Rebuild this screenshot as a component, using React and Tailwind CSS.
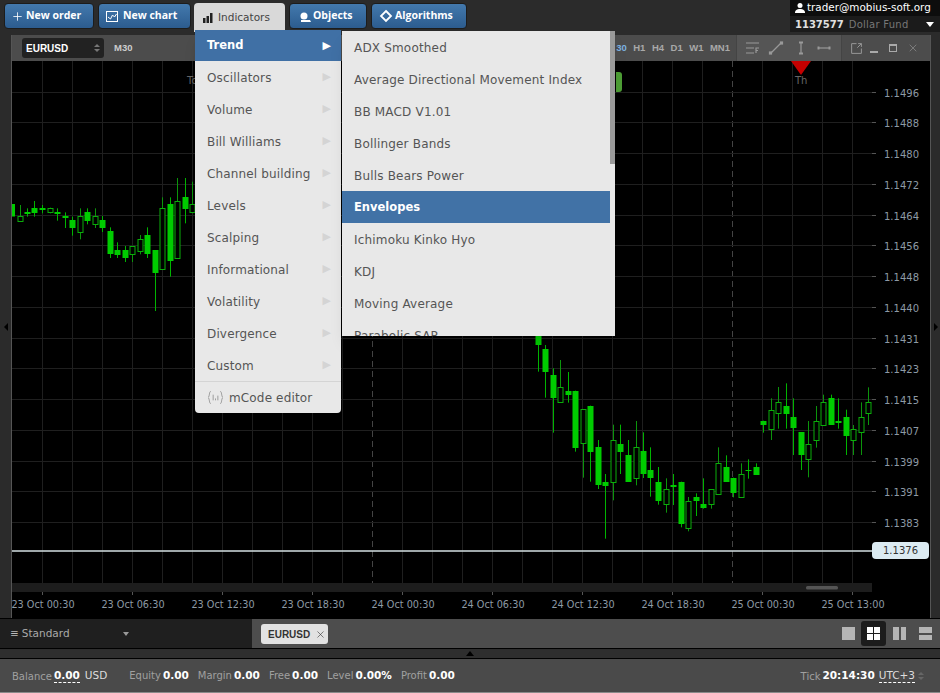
import React from 'react';
import { X, Plus } from 'lucide-react';

// candle tables are read off the screenshot at 3x: [x, wickTop, wickBottom, bodyTop, bodyBottom, hollow]
const leftCandles = [
  [59, 105, 152, 138, 152, 1], [81, 115, 140, 126, 132, 0], [103, 93, 140, 114, 129, 0], [126, 105, 130, 114, 120, 0],
  [149, 113, 130, 115, 128, 1], [171, 115, 152, 125, 131, 0], [194, 127, 174, 138, 143, 0], [216, 140, 197, 149, 174, 0],
  [239, 115, 208, 138, 185, 1], [261, 115, 163, 126, 152, 0], [284, 115, 174, 138, 162, 1], [306, 138, 186, 149, 174, 0],
  [329, 172, 264, 183, 253, 0], [351, 217, 264, 240, 254, 0], [374, 228, 276, 240, 264, 0], [397, 229, 276, 229, 254, 1],
  [419, 195, 253, 206, 242, 1], [442, 172, 264, 195, 253, 0], [464, 240, 423, 240, 310, 0], [487, 82, 298, 115, 298, 1],
  [509, 82, 320, 103, 275, 0], [532, 24, 264, 92, 264, 1], [554, 24, 160, 81, 116, 0], [577, 35, 130, 103, 128, 1],
];
const midCandles = [
  [24, 0, 125, 0, 45, 0], [46, 45, 203, 56, 126, 0], [68, 115, 308, 136, 205, 0], [91, 90, 218, 172, 218, 1],
  [113, 126, 218, 182, 195, 0], [136, 182, 365, 182, 352, 0], [158, 238, 443, 238, 341, 1], [181, 227, 455, 227, 364, 0],
  [204, 330, 477, 352, 466, 0], [226, 432, 626, 455, 468, 0], [248, 284, 511, 330, 455, 1], [271, 284, 432, 341, 365, 0],
  [294, 330, 456, 375, 456, 0], [317, 273, 466, 352, 444, 1], [339, 307, 444, 364, 433, 0], [361, 352, 500, 421, 446, 0],
  [384, 411, 524, 455, 513, 0], [407, 445, 548, 478, 524, 1], [429, 432, 525, 466, 471, 0], [452, 455, 592, 455, 581, 0],
  [474, 501, 604, 512, 592, 1], [497, 490, 558, 501, 513, 0], [519, 445, 536, 523, 536, 0], [542, 478, 536, 478, 524, 1],
  [565, 352, 490, 398, 490, 1], [587, 376, 456, 410, 456, 0], [609, 443, 502, 444, 490, 0], [632, 400, 502, 433, 502, 1],
  [654, 388, 446, 421, 425, 0], [677, 400, 433, 410, 433, 0],
];
const rightCandles = [
  [70, 152, 188, 152, 165, 0], [92, 85, 210, 119, 176, 1], [115, 51, 176, 97, 131, 1], [137, 40, 176, 108, 131, 0],
  [160, 85, 255, 142, 176, 0], [183, 187, 300, 187, 255, 0], [205, 153, 322, 221, 267, 1], [228, 108, 233, 153, 210, 1],
  [250, 74, 165, 97, 165, 1], [273, 74, 165, 85, 165, 0], [295, 85, 176, 153, 158, 0], [318, 119, 255, 142, 199, 0],
  [340, 165, 255, 176, 210, 1], [363, 97, 255, 142, 187, 1], [385, 52, 165, 97, 130, 1],
];

const prices = ['1.1496', '1.1488', '1.1480', '1.1472', '1.1464', '1.1456', '1.1448', '1.1440', '1.1431', '1.1423', '1.1415', '1.1407', '1.1399', '1.1391', '1.1383'];
const times = ['23 Oct 00:30', '23 Oct 06:30', '23 Oct 12:30', '23 Oct 18:30', '24 Oct 00:30', '24 Oct 06:30', '24 Oct 12:30', '24 Oct 18:30', '25 Oct 00:30', '25 Oct 13:00'];
const categories = ['Oscillators', 'Volume', 'Bill Williams', 'Channel building', 'Levels', 'Scalping', 'Informational', 'Volatility', 'Divergence', 'Custom'];
const trendItems = ['ADX Smoothed', 'Average Directional Movement Index', 'BB MACD V1.01', 'Bollinger Bands', 'Bulls Bears Power', 'Envelopes', 'Ichimoku Kinko Hyo', 'KDJ', 'Moving Average', 'Parabolic SAR'];

function Candles({ rows, ox, oy }) {
  return rows.map(([x, wt, wb, bt, bb, hollow]) => {
    const cx = Math.round(ox + x / 3) + 0.5;
    const top = Math.round(oy + bt / 3);
    const h = Math.max(1, Math.round((bb - bt) / 3));
    return (
      <g key={x}>
        <line x1={cx} x2={cx} y1={oy + wt / 3} y2={oy + wb / 3} stroke={hollow ? '#0b950b' : '#00b400'} />
        {hollow ? (
          <rect x={cx - 2.5} y={top + 0.5} width={5} height={h} fill="#000" stroke="#0aad0a" />
        ) : (
          <rect x={cx - 3} y={top} width={6} height={h} fill="#00cc00" />
        )}
      </g>
    );
  });
}

function Chart() {
  const vlines = Array.from({ length: 28 }, (_, i) => 42 + i * 30);
  return (
    <svg viewBox="12 61 918 557" className="block w-[918px] h-[557px] bg-black">
      {vlines.map((x) => (
        <line key={x} x1={x + 0.5} x2={x + 0.5} y1={61} y2={583} stroke={x === 372 || x === 732 ? '#444' : '#1f1f1f'} strokeDasharray={x === 372 || x === 732 ? '6 4' : undefined} />
      ))}
      {prices.map((p, i) => {
        const y = Math.round(91.5 + i * 30.76) + 0.5;
        return (
          <g key={p}>
            <line x1={12} x2={872} y1={y} y2={y} stroke="#1f1f1f" />
            <line x1={872} x2={876} y1={y} y2={y} stroke="#555" />
            <text x={884} y={y + 4} fill="#8d9aa5" fontSize="10" fontFamily="DejaVu Sans">{p}</text>
          </g>
        );
      })}
      <rect x={12} y={204} width={3} height={12.5} fill="#00cc00" />
      <Candles rows={leftCandles} ox={0} oy={170} />
      <Candles rows={midCandles} ox={530} oy={330} />
      <Candles rows={rightCandles} ox={740} oy={370} />
      <text x={187} y={84} fill="#666" fontSize="10" fontFamily="DejaVu Sans">To</text>
      <path d="M616 72h3a3 3 0 0 1 3 3v14a3 3 0 0 1-3 3h-3z" fill="#4d9e35" />
      <path d="M791 61h20l-10 14z" fill="#c40000" />
      <text x={795} y={84} fill="#666" fontSize="10" fontFamily="DejaVu Sans">Th</text>
      <rect x={12} y={583} width={860} height={9} fill="#1d1d1d" />
      <rect x={806} y={586} width={32} height={3.5} rx={1.5} fill="#555" />
      {times.map((t, i) => (
        <g key={t}>
          <line x1={42.5 + i * 90} x2={42.5 + i * 90} y1={592} y2={595} stroke="#555" />
          <text x={43 + i * 90} y={608} textAnchor="middle" fill="#8d9aa5" fontSize="9.7" fontFamily="DejaVu Sans">{t}</text>
        </g>
      ))}
      <line x1={12} x2={872} y1={551} y2={551} stroke="#d5e0e3" strokeWidth="1.5" />
    </svg>
  );
}

function ToolIcon({ children, className }) {
  return (
    <svg viewBox="0 0 16 16" className={className} fill="none" stroke="#999" strokeWidth="1.2">
      {children}
    </svg>
  );
}

function TopButton({ icon, label, className }) {
  return (
    <button className={`flex items-center h-[26px] rounded-sm border border-[#1c1c1c] bg-gradient-to-b from-[#4379ad] to-[#2c5c8f] text-white text-[10.500px] font-bold font-['Open_Sans',sans-serif] ${className}`}>
      {icon}
      {label}
    </button>
  );
}

function Stat({ label, value, className }) {
  return (
    <span className={`flex items-baseline gap-[2px] ${className}`}>
      <span className="text-[10px] text-[#a0a0a0]">{label}</span>
      <b className="text-white">{value}</b>
    </span>
  );
}

export default function App() {
  return (
    <div className="relative w-[940px] h-[693px] overflow-hidden flex flex-col bg-[#2b2b2b] font-['DejaVu_Sans',sans-serif]">
      {/* top bar */}
      <div className="h-8 flex items-start shrink-0 bg-[#2b2b2b]">
        <div className="flex items-start gap-1 pl-1 pt-[3px]">
          <TopButton className="w-[90px] pl-[6px] gap-[2px]" label="New order" icon={<Plus size={13} strokeWidth={1.5} />} />
          <TopButton className="w-[93px] pl-[7px] gap-1" label="New chart" icon={
            <svg viewBox="0 0 13 13" className="w-[13px] h-[13px]" fill="none" stroke="#fff"><rect x=".5" y="1.5" width="11" height="10" /><path d="M2 7l2.500 2 2-4 2 2 2-3" /></svg>
          } />
          <button className="flex items-center gap-1 w-[91px] h-[29px] pl-2 -ml-[1px] bg-[#d9d9d9] text-[#444] text-[10.500px] rounded-t-sm">
            <svg viewBox="0 0 12 12" className="w-3 h-3" fill="#222"><rect x="1" y="6" width="2.500" height="5" /><rect x="4.500" y="4" width="2.500" height="7" /><rect x="8" y="1" width="2.500" height="10" /></svg>
            Indicators
          </button>
          <TopButton className="w-[78px] pl-2 gap-[1px]" label="Objects" icon={
            <svg viewBox="0 0 14 14" className="w-[14px] h-[14px]" fill="#fff"><circle cx="6" cy="7" r="3.500" /><path d="M3 11h9l1 2H3z" /></svg>
          } />
          <TopButton className="w-[96px] pl-[7px] gap-[2px]" label="Algorithms" icon={
            <svg viewBox="0 0 14 14" className="w-[14px] h-[14px]" fill="none" stroke="#fff" strokeWidth="1.800"><path d="M7 2l5 5-5 5-5-5z" /></svg>
          } />
        </div>
        <div className="ml-auto w-[150px] h-8 flex flex-col text-[10.400px]">
          <div className="h-4 bg-[#0d0d0d] text-white flex items-center pl-1 gap-[1px]">
            <svg viewBox="0 0 12 12" className="w-3 h-3" fill="#fff"><circle cx="6" cy="3.500" r="2.500" /><path d="M1 11c0-3 2-4 5-4s5 1 5 4z" /></svg>
            trader@mobius-soft.org
          </div>
          <div className="h-4 bg-[#1b1b1b] flex items-center pl-[5px] gap-[5px] text-[10px]">
            <b className="text-[#e0e0e0]">1137577</b>
            <span className="text-[#777] tracking-[0.25px]">Dollar Fund</span>
            <span className="ml-auto mr-[6px] border-x-[4px] border-x-transparent border-t-[5px] border-t-white" />
          </div>
        </div>
      </div>

      {/* chart window */}
      <div className="flex-1 flex min-h-0 pt-[3px]">
        <div className="w-3 flex items-center justify-center border-r border-[#555]">
          <span className="border-y-[4px] border-y-transparent border-r-[4px] border-r-black" />
        </div>
        <div className="w-[918px] flex flex-col">
          <div className="h-[26px] flex items-center bg-[#4c4c4c] text-[9.500px] font-bold text-[#a8a8a8] font-['Liberation_Sans',sans-serif]">
            <div className="ml-[10px] w-[82px] h-5 rounded-[3px] bg-[#222] flex items-center pl-1 text-white text-[10px]">
              EURUSD
              <span className="ml-auto mr-1 flex flex-col gap-[2px]">
                <span className="border-x-[3px] border-x-transparent border-b-[3px] border-b-[#777]" />
                <span className="border-x-[3px] border-x-transparent border-t-[3px] border-t-[#777]" />
              </span>
            </div>
            <span className="ml-[10px] text-[#ccc]">M30</span>
            <div className="ml-auto flex items-center gap-[6.500px] pr-[6px]">
              <span className="text-[#7cb2e0]">30</span>
              <span>H1</span><span>H4</span><span>D1</span><span>W1</span><span>MN1</span>
            </div>
            <div className="w-[105px] h-[26px] bg-[#555] border-l border-[#444] flex items-center gap-[7px] pl-[8px]">
              <ToolIcon className="w-4 h-4"><path d="M1 3h13M1 8h8M1 13h8" /><path d="M11 13V8h3M11 10.500h2" /></ToolIcon>
              <ToolIcon className="w-4 h-4"><path d="M3 13L13 3" /><rect x="1.500" y="12" width="2" height="2" fill="#999" /><rect x="12.500" y="2" width="2" height="2" fill="#999" /></ToolIcon>
              <ToolIcon className="w-4 h-4 ml-[2px]"><path d="M8 3v10" /><path d="M6 2.500h4M6 13.500h4" strokeWidth="2" /></ToolIcon>
              <ToolIcon className="w-4 h-4"><path d="M3 8h10" /><path d="M2.500 6.500v3M13.500 6.500v3" strokeWidth="2" /></ToolIcon>
            </div>
            <div className="w-[89px] h-[26px] bg-[#4c4c4c] border-l border-[#444] flex items-center gap-[7px] pl-[8px]">
              <ToolIcon className="w-[13px] h-[13px]"><path d="M8 2H2v12h12V8M9 7l5-5M10 2h4v4" /></ToolIcon>
              <span className="w-2 h-[2px] mt-[7px] bg-[#aaa]" />
              <span className="w-2 h-[8px] ml-[4px] border border-t-2 border-[#aaa]" />
              <X size={12} strokeWidth={1} className="ml-[3px] text-[#aaa]" />
            </div>
          </div>
          <div className="relative">
            <Chart />
            <div className="absolute left-[860px] top-[481px] w-[57px] h-[17px] rounded-sm bg-[#dcebf2] text-[#333] text-[10px] flex items-center justify-center">1.1376</div>
          </div>
        </div>
        <div className="flex-1 flex items-center justify-center border-l border-[#555]">
          <span className="border-y-[4px] border-y-transparent border-l-[4px] border-l-black" />
        </div>
      </div>

      {/* tab bar */}
      <div className="h-[30px] flex shrink-0 border-t border-black bg-[#4d4d4d]">
        <div className="w-[252px] bg-[#1f1f1f] flex items-center pl-[10px] pt-[1px] text-[10.500px] text-[#aaa]">
          <span className="text-[#bbb] mr-[3px]">≡</span>Standard
          <span className="ml-[53px] border-x-[3px] border-x-transparent border-t-[4px] border-t-[#999]" />
        </div>
        <div className="ml-[9px] mt-[5px] w-[67px] h-[20px] rounded-[3px] bg-[#e2e2e2] flex items-center pl-[7px] gap-[5px] text-[10px] font-bold text-[#333] font-['Liberation_Sans',sans-serif]">
          EURUSD <X size={11} strokeWidth={1.3} />
        </div>
        <div className="ml-auto flex items-center pr-2 gap-[6px]">
          <span className="w-[13px] h-[13px] bg-[#b5b5b5]" />
          <span className="w-[25px] h-[25px] rounded-[3px] bg-[#1c1c1c] grid grid-cols-2 gap-[1px] p-[6px]">
            <i className="bg-white" /><i className="bg-white" /><i className="bg-white" /><i className="bg-white" />
          </span>
          <span className="w-[13px] h-[13px] ml-[1px] grid grid-cols-2 gap-[2px]">
            <i className="bg-[#b5b5b5]" /><i className="bg-[#b5b5b5]" />
          </span>
          <span className="w-[13px] h-[13px] ml-[7px] grid grid-rows-2 gap-[2px]">
            <i className="bg-[#b5b5b5]" /><i className="bg-[#b5b5b5]" />
          </span>
        </div>
      </div>

      {/* collapse strip */}
      <div className="h-[10px] shrink-0 border-t border-black bg-[#2e2e2e] flex items-center justify-center">
        <span className="ml-[-1px] border-x-[4px] border-x-transparent border-b-[5px] border-b-black" />
      </div>

      {/* status bar */}
      <div className="h-[35px] shrink-0 flex items-center bg-[#4a4a4a] border-t border-black border-b-[#8a8a8a] border-b pl-3 pr-4 pt-[1px] text-[10.500px]">
        <span className="text-[10px] text-[#a0a0a0]">Balance</span>
        <b className="ml-[2px] text-white border-b border-dashed border-white leading-[13px]">0.00</b>
        <span className="ml-[5px] text-[#ddd]">USD</span>
        <Stat label="Equity" value="0.00" className="ml-[22px]" />
        <Stat label="Margin" value="0.00" className="ml-[9px]" />
        <Stat label="Free" value="0.00" className="ml-[9px]" />
        <Stat label="Level" value="0.00%" className="ml-[9px]" />
        <Stat label="Profit" value="0.00" className="ml-[9px]" />
        <span className="ml-auto text-[10px] text-[#a0a0a0]">Tick</span>
        <b className="ml-[2px] text-white">20:14:30</b>
        <span className="ml-[4px] text-[#ddd] border-b border-dashed border-white leading-[13px]">UTC+3</span>
        <span className="ml-[3px] flex flex-col gap-[2px]">
          <span className="border-x-[3px] border-x-transparent border-b-[3px] border-b-[#666]" />
          <span className="border-x-[3px] border-x-transparent border-t-[3px] border-t-[#666]" />
        </span>
      </div>

      {/* indicators menu */}
      <div className="absolute left-[195px] top-[30px] w-[146px] bg-[#e8e8e8] rounded-b-sm shadow-lg text-[12px] tracking-[0.15px] text-[#555]">
        <div className="h-[31px] pl-3 pr-[10px] pt-[1px] flex items-center justify-between bg-[#4070a5] text-white text-[11.500px] tracking-normal font-bold">
          Trend<span className="text-[11px]">▶</span>
        </div>
        {categories.map((c) => (
          <div key={c} className="h-8 pl-3 pr-[10px] pt-[1px] flex items-center justify-between">
            {c}<span className="text-[11px] text-[#d4d4d4]">▶</span>
          </div>
        ))}
        <div className="h-8 px-3 flex items-center gap-[5px] border-t border-[#d4d4d4]">
          <svg viewBox="0 0 18 16" className="w-[17px] h-[15px]" fill="none" stroke="#999" strokeWidth="1"><path d="M4 1.500C2 1.500 3 7 1 8c2 1 1 6.500 3 6.500M14 1.500c2 0 1 5.500 3 6.500-2 1-1 6.500-3 6.500M6.500 5v6M9 9v2M11.500 6v5" /></svg>
          mCode editor
        </div>
      </div>

      {/* trend submenu */}
      <div className="absolute left-[342px] top-[31px] w-[273px] h-[305px] overflow-hidden bg-[#e8e8e8] shadow-lg text-[12px] tracking-[0.18px] text-[#555]">
        {trendItems.map((item) => (
          <div key={item} className={item === 'Envelopes' ? 'h-8 w-[268px] pl-3 pt-[2px] flex items-center bg-[#4172a6] text-white text-[11.500px] tracking-normal font-bold' : 'h-8 pl-3 pt-[1px] flex items-center'}>
            {item}
          </div>
        ))}
        <div className="absolute right-0 top-0 w-[5px] h-[133px] bg-[#9a9a9a]" />
      </div>
    </div>
  );
}
